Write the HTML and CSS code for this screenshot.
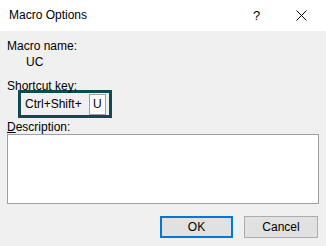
FILE: index.html
```html
<!DOCTYPE html>
<html lang="en">
<head>
  <meta charset="UTF-8" />
  <title>Macro Options</title>
  <link rel="stylesheet" href="styles.css">
</head>
<body>
  <div class="dialog">
    <!-- Title bar -->
    <header class="titlebar">
      <span class="title">Macro Options</span>
      <span class="help">?</span>
      <svg class="close" width="11" height="11" viewBox="0 0 11 11">
        <path d="M0.5 0.5 L10.5 10.5 M10.5 0.5 L0.5 10.5" stroke="#000" stroke-width="1" fill="none"/>
      </svg>
    </header>

    <!-- Dialog body -->
    <main class="content">
      <div class="label first">Macro name:</div>
      <div class="macro-name">UC</div>

      <div class="label shortcut-label">Shortcut key:</div>
      <div class="shortcut">
        <span>Ctrl+Shift+</span>
        <span class="key-box">U</span>
      </div>

      <div class="label desc-label"><u>D</u>escription:</div>
      <div class="description"></div>

      <div class="buttons">
        <button class="btn btn-default">OK</button>
        <button class="btn">Cancel</button>
      </div>
    </main>
  </div>
</body>
</html>
```

FILE: styles.css
```css
/* Reset */
* {
  margin: 0;
  padding: 0;
  box-sizing: border-box;
}
body {
  font-family: "Liberation Sans", Arial, sans-serif;
  font-size: 12px;
  line-height: 15px;
  color: #000;
  background-color: #f0f0f0;
  overflow: hidden;
}

.dialog {
  width: 326px;
  height: 246px;
  background-color: #f0f0f0;
}

/* Title bar */
.titlebar {
  height: 31px;
  background-color: #fff;
  display: flex;
  align-items: center;
  padding-left: 9px;
}
.titlebar .title {
  flex: 1;
  font-size: 12px;
  padding-bottom: 1px;
}
.titlebar .help {
  font-size: 13px;
  width: 8px;
  margin-right: 35px;
}
.titlebar .close {
  margin-right: 19px;
}

/* Body */
.content {
  padding: 0 7px;
}
.label.first {
  margin-top: 8px;
}
.macro-name {
  margin-top: 1px;
  padding-left: 19px;
}
.shortcut-label {
  margin-top: 9px;
}
.shortcut {
  margin-top: -4px;
  margin-left: 11px;
  width: 94px;
  height: 28px;
  border: 3px solid #0f4a4f;
  display: flex;
  align-items: center;
  padding-left: 4px;
}
.shortcut span:first-child {
  flex: 1;
}
.key-box {
  width: 17px;
  height: 21px;
  margin-right: 3px;
  background-color: #fff;
  border: 1px solid #a0a0a0;
  padding-left: 3px;
  line-height: 19px;
}
.desc-label {
  margin-top: 2px;
}
.description {
  margin-top: -1px;
  height: 70px;
  background-color: #fff;
  border: 1px solid #a0a0a0;
}

/* Buttons */
.buttons {
  display: flex;
  justify-content: flex-end;
  gap: 11px;
  margin-top: 12px;
  margin-right: 1px;
}
.btn {
  font-family: "Liberation Sans", Arial, sans-serif;
  font-size: 12px;
  width: 74px;
  height: 22px;
  background-color: #e1e1e1;
  border: 1px solid #adadad;
  color: #000;
}
.btn-default {
  width: 73px;
  border: 2px solid #0078d7;
}
```
